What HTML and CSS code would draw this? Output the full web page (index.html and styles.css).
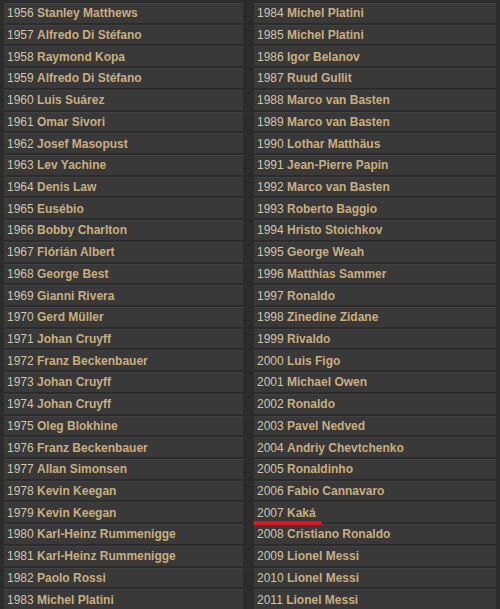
FILE: index.html
```html
<!DOCTYPE html>
<html>
<head>
<meta charset="utf-8">
<link rel="stylesheet" href="styles.css">
</head>
<body>
<div class="board">
  <ul class="col">
    <li class="row"><span class="txt">1956 <b>Stanley Matthews</b></span></li>
    <li class="row"><span class="txt">1957 <b>Alfredo Di Stéfano</b></span></li>
    <li class="row"><span class="txt">1958 <b>Raymond Kopa</b></span></li>
    <li class="row"><span class="txt">1959 <b>Alfredo Di Stéfano</b></span></li>
    <li class="row"><span class="txt">1960 <b>Luis Suárez</b></span></li>
    <li class="row"><span class="txt">1961 <b>Omar Sivori</b></span></li>
    <li class="row"><span class="txt">1962 <b>Josef Masopust</b></span></li>
    <li class="row"><span class="txt">1963 <b>Lev Yachine</b></span></li>
    <li class="row"><span class="txt">1964 <b>Denis Law</b></span></li>
    <li class="row"><span class="txt">1965 <b>Eusébio</b></span></li>
    <li class="row"><span class="txt">1966 <b>Bobby Charlton</b></span></li>
    <li class="row"><span class="txt">1967 <b>Flórián Albert</b></span></li>
    <li class="row"><span class="txt">1968 <b>George Best</b></span></li>
    <li class="row"><span class="txt">1969 <b>Gianni Rivera</b></span></li>
    <li class="row"><span class="txt">1970 <b>Gerd Müller</b></span></li>
    <li class="row"><span class="txt">1971 <b>Johan Cruyff</b></span></li>
    <li class="row"><span class="txt">1972 <b>Franz Beckenbauer</b></span></li>
    <li class="row"><span class="txt">1973 <b>Johan Cruyff</b></span></li>
    <li class="row"><span class="txt">1974 <b>Johan Cruyff</b></span></li>
    <li class="row"><span class="txt">1975 <b>Oleg Blokhine</b></span></li>
    <li class="row"><span class="txt">1976 <b>Franz Beckenbauer</b></span></li>
    <li class="row"><span class="txt">1977 <b>Allan Simonsen</b></span></li>
    <li class="row"><span class="txt">1978 <b>Kevin Keegan</b></span></li>
    <li class="row"><span class="txt">1979 <b>Kevin Keegan</b></span></li>
    <li class="row"><span class="txt">1980 <b>Karl-Heinz Rummenigge</b></span></li>
    <li class="row"><span class="txt">1981 <b>Karl-Heinz Rummenigge</b></span></li>
    <li class="row"><span class="txt">1982 <b>Paolo Rossi</b></span></li>
    <li class="row"><span class="txt">1983 <b>Michel Platini</b></span></li>
  </ul>
  <ul class="col">
    <li class="row"><span class="txt">1984 <b>Michel Platini</b></span></li>
    <li class="row"><span class="txt">1985 <b>Michel Platini</b></span></li>
    <li class="row"><span class="txt">1986 <b>Igor Belanov</b></span></li>
    <li class="row"><span class="txt">1987 <b>Ruud Gullit</b></span></li>
    <li class="row"><span class="txt">1988 <b>Marco van Basten</b></span></li>
    <li class="row"><span class="txt">1989 <b>Marco van Basten</b></span></li>
    <li class="row"><span class="txt">1990 <b>Lothar Matthäus</b></span></li>
    <li class="row"><span class="txt">1991 <b>Jean-Pierre Papin</b></span></li>
    <li class="row"><span class="txt">1992 <b>Marco van Basten</b></span></li>
    <li class="row"><span class="txt">1993 <b>Roberto Baggio</b></span></li>
    <li class="row"><span class="txt">1994 <b>Hristo Stoichkov</b></span></li>
    <li class="row"><span class="txt">1995 <b>George Weah</b></span></li>
    <li class="row"><span class="txt">1996 <b>Matthias Sammer</b></span></li>
    <li class="row"><span class="txt">1997 <b>Ronaldo</b></span></li>
    <li class="row"><span class="txt">1998 <b>Zinedine Zidane</b></span></li>
    <li class="row"><span class="txt">1999 <b>Rivaldo</b></span></li>
    <li class="row"><span class="txt">2000 <b>Luis Figo</b></span></li>
    <li class="row"><span class="txt">2001 <b>Michael Owen</b></span></li>
    <li class="row"><span class="txt">2002 <b>Ronaldo</b></span></li>
    <li class="row"><span class="txt">2003 <b>Pavel Nedved</b></span></li>
    <li class="row"><span class="txt">2004 <b>Andriy Chevtchenko</b></span></li>
    <li class="row"><span class="txt">2005 <b>Ronaldinho</b></span></li>
    <li class="row"><span class="txt">2006 <b>Fabio Cannavaro</b></span></li>
    <li class="row marked"><span class="txt">2007 <b>Kaká</b></span></li>
    <li class="row"><span class="txt">2008 <b>Cristiano Ronaldo</b></span></li>
    <li class="row"><span class="txt">2009 <b>Lionel Messi</b></span></li>
    <li class="row"><span class="txt">2010 <b>Lionel Messi</b></span></li>
    <li class="row"><span class="txt">2011 <b>Lionel Messi</b></span></li>
  </ul>
</div>
</body>
</html>
```
FILE: styles.css
```css
html, body {
  margin: 0;
  padding: 0;
  background: #2c2c2c;
}
body {
  font-family: "Liberation Sans", Arial, sans-serif;
  font-size: 12px;
  width: 500px;
  height: 609px;
  overflow: hidden;
}
.board {
  display: grid;
  grid-template-columns: 239px 242px;
  column-gap: 11px;
  padding: 3px 0 0 4px;
  height: 606px;
}
.col {
  list-style: none;
  margin: 0;
  padding: 0;
  display: grid;
  grid-template-rows: repeat(28, 1fr);
  row-gap: 2px;
}
.row {
  position: relative;
  background: #393939;
  border-top: 1px solid #424242;
  box-sizing: border-box;
  display: flex;
  align-items: center;
  padding-left: 3px;
}
.txt {
  white-space: nowrap;
  color: #cfc5a8;
}
.txt b {
  color: #c9ae7d;
  font-weight: bold;
}
.marked::after {
  content: "";
  position: absolute;
  z-index: 2;
  left: -1px;
  bottom: -3px;
  width: 69px;
  height: 4px;
  border-radius: 2px;
  background: #e8101c;
}
```
